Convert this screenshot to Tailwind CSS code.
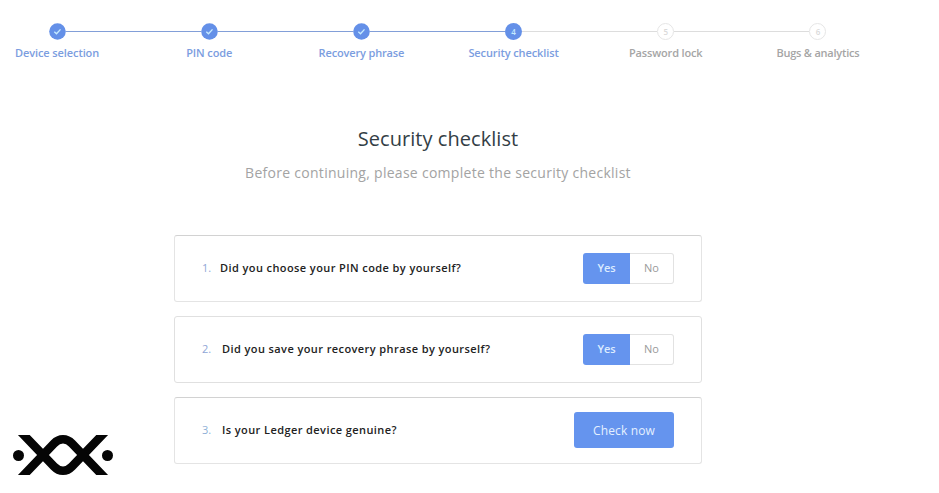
<!DOCTYPE html>
<html lang="en">
<head>
    <meta charset="UTF-8" />
    <title>Security checklist</title>
    <script src="https://cdn.jsdelivr.net/npm/@tailwindcss/browser@4"></script>
</head>
<body class="relative h-[493px] overflow-hidden bg-white font-['Open_Sans',sans-serif]">

<!-- Stepper -->
<ol class="-ml-[19px] grid w-[913px] grid-cols-6 pt-[23px] text-center text-[11px] leading-4 font-semibold text-[#7b9de0]">
    <li class="flex flex-col items-center">
        <div class="flex w-full items-center">
            <span class="h-px flex-1"></span>
            <svg class="size-[17px]" viewBox="0 0 17 17"><circle cx="8.5" cy="8.5" r="8.3" fill="#6490e8" /><path d="M5.3 8.8l2.2 2 4-4.4" fill="none" stroke="#c5eaff" stroke-width="1.4" /></svg>
            <span class="h-px flex-1 bg-[#829fd8]"></span>
        </div>
        <span class="mt-[5px] tracking-[-0.1px] whitespace-nowrap">Device selection</span>
    </li>
    <li class="flex flex-col items-center">
        <div class="flex w-full items-center">
            <span class="h-px flex-1 bg-[#829fd8]"></span>
            <svg class="size-[17px]" viewBox="0 0 17 17"><circle cx="8.5" cy="8.5" r="8.3" fill="#6490e8" /><path d="M5.3 8.8l2.2 2 4-4.4" fill="none" stroke="#c5eaff" stroke-width="1.4" /></svg>
            <span class="h-px flex-1 bg-[#829fd8]"></span>
        </div>
        <span class="mt-[5px] tracking-[-0.1px] whitespace-nowrap">PIN code</span>
    </li>
    <li class="flex flex-col items-center">
        <div class="flex w-full items-center">
            <span class="h-px flex-1 bg-[#829fd8]"></span>
            <svg class="size-[17px]" viewBox="0 0 17 17"><circle cx="8.5" cy="8.5" r="8.3" fill="#6490e8" /><path d="M5.3 8.8l2.2 2 4-4.4" fill="none" stroke="#c5eaff" stroke-width="1.4" /></svg>
            <span class="h-px flex-1 bg-[#829fd8]"></span>
        </div>
        <span class="mt-[5px] tracking-[-0.15px] whitespace-nowrap">Recovery phrase</span>
    </li>
    <li class="flex flex-col items-center">
        <div class="flex w-full items-center">
            <span class="h-px flex-1 bg-[#829fd8]"></span>
            <span class="size-[17px] rounded-full bg-[#6490e8] text-[8px] leading-[17px] text-[#c5eaff]">4</span>
            <span class="h-px flex-1 bg-[#dddddd]"></span>
        </div>
        <span class="mt-[5px] tracking-[-0.1px] whitespace-nowrap">Security checklist</span>
    </li>
    <li class="flex flex-col items-center text-[#a5a5a5]">
        <div class="flex w-full items-center">
            <span class="h-px flex-1 bg-[#dddddd]"></span>
            <span class="size-[17px] rounded-full border border-[#e6e6e6] text-[8px] leading-[15px] text-[#dadada]">5</span>
            <span class="h-px flex-1 bg-[#dddddd]"></span>
        </div>
        <span class="mt-[5px] tracking-[-0.15px] whitespace-nowrap">Password lock</span>
    </li>
    <li class="flex flex-col items-center text-[#a5a5a5]">
        <div class="flex w-full items-center">
            <span class="h-px flex-1 bg-[#dddddd]"></span>
            <span class="size-[17px] rounded-full border border-[#e6e6e6] text-[8px] leading-[15px] text-[#dadada]">6</span>
            <span class="h-px flex-1"></span>
        </div>
        <span class="mt-[5px] tracking-[-0.22px] whitespace-nowrap">Bugs &amp; analytics</span>
    </li>
</ol>

<!-- Checklist -->
<main class="ml-[174px] w-[528px] pt-[64px]">
    <h1 class="text-center text-[20px] leading-7 font-medium tracking-[0.05px] text-[#333e45]">Security checklist</h1>
    <p class="mt-[10px] text-center text-[14px] leading-5 tracking-[0.28px] whitespace-nowrap text-[#a3a3a3]">Before continuing, please complete the security checklist</p>

    <div class="mt-[52px] flex flex-col gap-[14px] text-[11px] font-semibold text-[#222]">
        <div class="flex h-[67px] items-center rounded-[3px] border border-[#e4e4e4] border-t-[#d2d2d2] px-[27px]">
            <span class="w-[18px] font-normal text-[#8fa6d6]">1.</span>
            <span class="flex-1 tracking-[0.41px] whitespace-nowrap">Did you choose your PIN code by yourself?</span>
            <div class="flex h-[31px] w-[91px] text-center leading-[30px]">
                <span class="w-[47px] rounded-l-[3px] bg-[#6594ee] text-[#dcecff]">Yes</span>
                <span class="flex-1 rounded-r-[3px] border border-l-0 border-[#e2e2e2] leading-[28px] font-normal text-[#9a9a9a]">No</span>
            </div>
        </div>
        <div class="flex h-[67px] items-center rounded-[3px] border border-[#e0e0e0] px-[27px]">
            <span class="w-[20px] font-normal text-[#8fa6d6]">2.</span>
            <span class="flex-1 tracking-[0.41px] whitespace-nowrap">Did you save your recovery phrase by yourself?</span>
            <div class="flex h-[31px] w-[91px] text-center leading-[30px]">
                <span class="w-[47px] rounded-l-[3px] bg-[#6594ee] text-[#dcecff]">Yes</span>
                <span class="flex-1 rounded-r-[3px] border border-l-0 border-[#e2e2e2] leading-[28px] font-normal text-[#9a9a9a]">No</span>
            </div>
        </div>
        <div class="flex h-[67px] items-center rounded-[3px] border border-[#e4e4e4] border-t-[#d2d2d2] px-[27px]">
            <span class="w-[20px] font-normal text-[#8fb0d6]">3.</span>
            <span class="flex-1 tracking-[0.41px] whitespace-nowrap">Is your Ledger device genuine?</span>
            <span class="mb-[2px] h-[36px] w-[100px] rounded-[3px] bg-[#6594ee] text-center text-[12px] leading-[37px] font-medium tracking-[0.15px] text-[#e4f0ff]">Check now</span>
        </div>
    </div>
</main>

<!-- Logo -->
<svg class="absolute top-[435px] left-[12px] h-[40px] w-[102px]" viewBox="0 0 102 40">
    <g fill="none" stroke="#050505" stroke-width="8.5">
        <path d="M8-4L31 20L42 31.500Q46 35.700 51 35.700T60 31.500L71 20L94-4" />
        <path d="M8 44L31 20L42 8.500Q46 4.300 51 4.300T60 8.500L71 20L94 44" />
    </g>
    <circle cx="6.500" cy="20.500" r="5.500" fill="#050505" />
    <circle cx="95.500" cy="20.500" r="5.500" fill="#050505" />
</svg>
</body>
</html>
